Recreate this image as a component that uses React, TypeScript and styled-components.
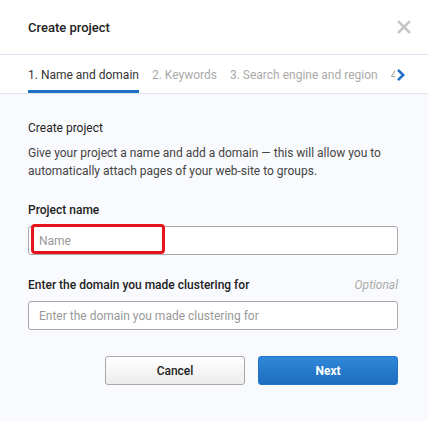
import styled, { createGlobalStyle } from 'styled-components';

const Global = createGlobalStyle`
  html, body {
    margin: 0;
    padding: 0;
    background: #fff;
  }
  * {
    box-sizing: border-box;
  }
`;

const steps = ['1. Name and domain', '2. Keywords', '3. Search engine and region', '4. Groups'];

export default function App() {
  return (<>
    <Global />
    <Dialog>
      <Header>
        <Title>Create project</Title>
        <CloseButton aria-label="Close">
          <svg width="14" height="14" viewBox="0 0 14 14">
            <path d="M2 2 L12 12 M12 2 L2 12" stroke="#c6c6c6" strokeWidth="2.6" strokeLinecap="square" />
          </svg>
        </CloseButton>
      </Header>
      <Tabs>
        <TabList>
          {steps.map((s, i) => <Tab key={s} $active={i === 0}>{s}</Tab>)}
        </TabList>
        <ScrollButton aria-label="Next step">
          <svg width="10" height="14" viewBox="0 0 10 14">
            <path d="M2 1.8 L7.2 7 L2 12.2" fill="none" stroke="#1f6fc4" strokeWidth="2.6" />
          </svg>
        </ScrollButton>
      </Tabs>
      <Body>
        <Subtitle>Create project</Subtitle>
        <Text>Give your project a name and add a domain — this will allow you to automatically attach pages of your web-site to groups.</Text>

        <Field>
          <LabelRow><Label>Project name</Label></LabelRow>
          <InputWrap>
            <Input placeholder="Name" />
            <Highlight />
          </InputWrap>
        </Field>

        <Field>
          <LabelRow>
            <Label>Enter the domain you made clustering for</Label>
            <Optional>Optional</Optional>
          </LabelRow>
          <Input placeholder="Enter the domain you made clustering for" />
        </Field>

        <Actions>
          <Button>Cancel</Button>
          <Button $primary>Next</Button>
        </Actions>
      </Body>
    </Dialog>
  </>)
}

const Dialog = styled.div`
  width: 428px;
  height: 422px;
  display: flex;
  flex-direction: column;
  font-family: Roboto, "Liberation Sans", sans-serif;
  background: #f9fafd;
  color: #222;
`

const Header = styled.div`
  height: 55px;
  flex: none;
  display: flex;
  align-items: center;
  justify-content: space-between;
  padding: 0 17px 0 28px;
  background: #fff;
  border-bottom: 1px solid #dde3ef;
`

const Title = styled.h1`
  margin: 0;
  font-size: 13px;
  font-weight: 500;
  color: #222;
`

const CloseButton = styled.button`
  border: 0;
  background: none;
  padding: 0;
  width: 14px;
  height: 14px;
  display: flex;
`

const Tabs = styled.div`
  height: 39px;
  flex: none;
  display: flex;
  background: #fff;
  border-bottom: 1px solid #dde3ef;
  overflow: hidden;
`

const TabList = styled.div`
  flex: 1;
  min-width: 0;
  display: flex;
  gap: 13px;
  padding-left: 28px;
  overflow: hidden;
  white-space: nowrap;
`

const Tab = styled.div<{ $active?: boolean }>`
  display: flex;
  align-items: center;
  padding-top: 5px;
  font-size: 12px;
  color: ${p => p.$active ? '#333' : '#aaa'};
  border-bottom: 3px solid ${p => p.$active ? '#1f6fc4' : 'transparent'};
`

const ScrollButton = styled.button`
  flex: none;
  width: 33px;
  border: 0;
  background: #fff;
  padding: 2px 0 0 1px;
  display: flex;
  align-items: center;
`

const Body = styled.div`
  flex: 1;
  display: flex;
  flex-direction: column;
  padding: 25px 30px 0 28px;
`

const Subtitle = styled.h2`
  margin: 0 0 7px;
  font-size: 12px;
  line-height: 18px;
  font-weight: 400;
  color: #222;
`

const Text = styled.p`
  margin: 0;
  font-size: 12px;
  line-height: 18px;
  color: #444;
`

const Field = styled.div`
  display: flex;
  flex-direction: column;
  gap: 7px;
  margin-top: 21px;
`

const LabelRow = styled.div`
  display: flex;
  justify-content: space-between;
  line-height: 18px;
`

const Label = styled.label`
  font-size: 12px;
  font-weight: 500;
  color: #222;
`

const Optional = styled.span`
  font-size: 12px;
  font-style: italic;
  color: #aaa;
`

const InputWrap = styled.div`
  position: relative;
`

const Input = styled.input`
  width: 100%;
  height: 29px;
  padding: 0 10px;
  border: 1px solid #a8a8a8;
  border-radius: 3px;
  background: #fff;
  font-family: inherit;
  font-size: 12px;
  color: #222;
  outline: none;
  &::placeholder {
    color: #999;
  }
`

const Highlight = styled.div`
  position: absolute;
  left: 3px;
  top: -2px;
  width: 134px;
  height: 30px;
  border: 3px solid #e5131b;
  border-radius: 4px;
  pointer-events: none;
`

const Actions = styled.div`
  display: flex;
  justify-content: flex-end;
  gap: 13px;
  margin-top: 26px;
`

const Button = styled.button<{ $primary?: boolean }>`
  width: 140px;
  height: 29px;
  border-radius: 3px;
  font-family: inherit;
  font-size: 12px;
  font-weight: ${p => p.$primary ? 700 : 500};
  color: ${p => p.$primary ? '#fff' : '#222'};
  border: 1px solid ${p => p.$primary ? '#2176c9' : '#a8a8a8'};
  background: ${p => p.$primary
    ? 'linear-gradient(#3088d8, #1e6dbf)'
    : 'linear-gradient(#ffffff, #ececec)'};
`
